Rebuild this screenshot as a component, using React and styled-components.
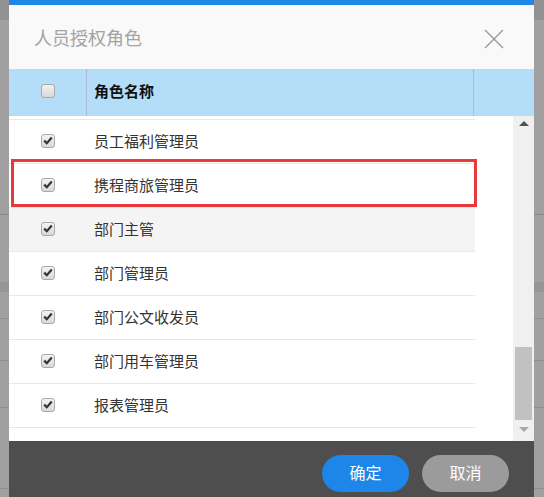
import React from 'react';
import styled, { createGlobalStyle } from 'styled-components';

const GlobalStyle = createGlobalStyle`
  html, body {
    margin: 0;
    padding: 0;
    background: #a0a0a0;
    overflow: hidden;
  }
  * {
    box-sizing: border-box;
  }
`;

const Page = styled.div`
  display: flex;
  width: 544px;
  height: 497px;
  font-family: 'Noto Sans CJK SC', 'Noto Sans', sans-serif;
`;

const Backdrop = styled.div`
  width: ${(p) => p.$w}px;
  flex-shrink: 0;
  background:
    linear-gradient(#929292, #929292) 0 0 / 100% 20px no-repeat,
    linear-gradient(#8a8a8a, #8a8a8a) 0 214px / 100% 1px no-repeat,
    linear-gradient(#959595, #959595) 0 282px / 100% 10px no-repeat,
    linear-gradient(#8e8e8e, #8e8e8e) 0 318px / 100% 1px no-repeat,
    linear-gradient(#8e8e8e, #8e8e8e) 0 360px / 100% 1px no-repeat,
    linear-gradient(#8e8e8e, #8e8e8e) 0 407px / 100% 1px no-repeat,
    linear-gradient(#8e8e8e, #8e8e8e) 0 488px / 100% 1px no-repeat,
    #a0a0a0;
`;

const Dialog = styled.div`
  width: 525px;
  height: 497px;
  display: flex;
  flex-direction: column;
  background: #fff;
  border-top: 5px solid #1e88e5;
`;

const TitleBar = styled.div`
  height: 64px;
  flex-shrink: 0;
  display: flex;
  align-items: center;
  justify-content: space-between;
  padding: 0 30px 0 25px;
  background: #f9f9f9;
`;

const Title = styled.div`
  font-size: 18px;
  color: #a3a3a3;
`;

const CloseButton = styled.button`
  border: none;
  background: none;
  padding: 0;
  margin-top: 4px;
  width: 20px;
  height: 20px;
  display: flex;
  cursor: pointer;
`;

const HeaderRow = styled.div`
  height: 47px;
  flex-shrink: 0;
  display: grid;
  grid-template-columns: 78px 387px 1fr;
  background: #b4ddf7;
`;

const HeaderCell = styled.div`
  display: flex;
  align-items: center;
  justify-content: ${(p) => (p.$center ? 'center' : 'flex-start')};
  padding-left: ${(p) => (p.$center ? 0 : 7)}px;
  padding-bottom: 4px;
  border-right: ${(p) => (p.$last ? 'none' : '1px solid #a9b9d6')};
  font-size: 15px;
  font-weight: 700;
  color: #111;
`;

const Body = styled.div`
  position: relative;
  flex: 1;
  display: flex;
  overflow: hidden;
`;

const Viewport = styled.div`
  width: 466px;
  overflow: hidden;
`;

/* the list is scrolled: only the bottom edge of the row above shows */
const List = styled.div`
  &::before {
    content: '';
    display: block;
    height: 3px;
    border-bottom: 1px solid #e8e8e8;
  }
`;

const Row = styled.div`
  height: 44px;
  display: grid;
  grid-template-columns: 78px 1fr;
  border-bottom: 1px solid #e8e8e8;
  background: ${(p) => (p.$hover ? '#f4f4f4' : '#fff')};
`;

const CheckCell = styled.div`
  display: flex;
  align-items: center;
  justify-content: center;
  padding: 0 1px 2px 0;
`;

const NameCell = styled.div`
  display: flex;
  align-items: center;
  padding: 0 0 3px 7px;
  font-size: 15px;
  color: #333;
`;

const Box = styled.span`
  width: 14px;
  height: 14px;
  border-radius: 3px;
  border: 1px solid #a9a9a9;
  background: linear-gradient(#f3f3f3, #d9d9d9);
  display: flex;
  align-items: center;
  justify-content: center;
`;

const Gap = styled.div`
  width: 38px;
`;

const Scrollbar = styled.div`
  width: 21px;
  background: #f0f0f0;
  display: flex;
  flex-direction: column;
  align-items: center;
  padding-top: 5px;
`;

const Arrow = styled.div`
  width: 0;
  height: 0;
  border-left: 5px solid transparent;
  border-right: 5px solid transparent;
  ${(p) =>
    p.$down
      ? `border-top: 5px solid ${p.$color};`
      : `border-bottom: 5px solid ${p.$color};`}
`;

const Thumb = styled.div`
  width: 17px;
  height: 73px;
  margin-top: 221px;
  background: #c1c1c1;
`;

const DownArrowSlot = styled.div`
  margin-top: 7px;
`;

const Highlight = styled.div`
  position: absolute;
  left: 2px;
  top: 43px;
  width: 466px;
  height: 48px;
  border: 3px solid #e83a3c;
  pointer-events: none;
`;

const Footer = styled.div`
  height: 56px;
  flex-shrink: 0;
  background: #4e4e4e;
  display: flex;
  justify-content: flex-end;
  gap: 13px;
  padding: 14px 25px 0 0;
`;

const Button = styled.button`
  width: 87px;
  height: 37px;
  border: none;
  border-radius: 19px;
  padding: 0 0 3px;
  background: ${(p) => (p.$primary ? '#1e86e8' : '#9b9b9b')};
  color: #fff;
  font-family: 'Noto Sans CJK SC', sans-serif;
  font-size: 16px;
  cursor: pointer;
`;

const roles = [
  { name: '员工福利管理员' },
  { name: '携程商旅管理员' },
  { name: '部门主管', hover: true },
  { name: '部门管理员' },
  { name: '部门公文收发员' },
  { name: '部门用车管理员' },
  { name: '报表管理员' },
];

function Checkbox({ checked }) {
  return (
    <Box>
      {checked && (
        <svg width="10" height="9" viewBox="0 0 10 9">
          <path d="M1.2 4.6 L3.8 7.2 L8.8 1.6" fill="none" stroke="#333" strokeWidth="2.2" />
        </svg>
      )}
    </Box>
  );
}

export default function App() {
  return (
    <>
      <GlobalStyle />
      <Page>
        <Backdrop $w={9} />
        <Dialog>
          <TitleBar>
            <Title>人员授权角色</Title>
            <CloseButton aria-label="关闭">
              <svg width="20" height="20" viewBox="0 0 20 20">
                <path d="M1 1 L19 19 M19 1 L1 19" stroke="#9a9a9a" strokeWidth="1.4" />
              </svg>
            </CloseButton>
          </TitleBar>
          <HeaderRow>
            <HeaderCell $center>
              <Checkbox />
            </HeaderCell>
            <HeaderCell>角色名称</HeaderCell>
            <HeaderCell $last />
          </HeaderRow>
          <Body>
            <Viewport>
              <List>
                {roles.map((r) => (
                  <Row key={r.name} $hover={r.hover}>
                    <CheckCell>
                      <Checkbox checked />
                    </CheckCell>
                    <NameCell>{r.name}</NameCell>
                  </Row>
                ))}
              </List>
            </Viewport>
            <Gap />
            <Scrollbar>
              <Arrow $color="#505050" />
              <Thumb />
              <DownArrowSlot>
                <Arrow $down $color="#a8a8a8" />
              </DownArrowSlot>
            </Scrollbar>
            <Highlight />
          </Body>
          <Footer>
            <Button $primary>确定</Button>
            <Button>取消</Button>
          </Footer>
        </Dialog>
        <Backdrop $w={10} />
      </Page>
    </>
  );
}
